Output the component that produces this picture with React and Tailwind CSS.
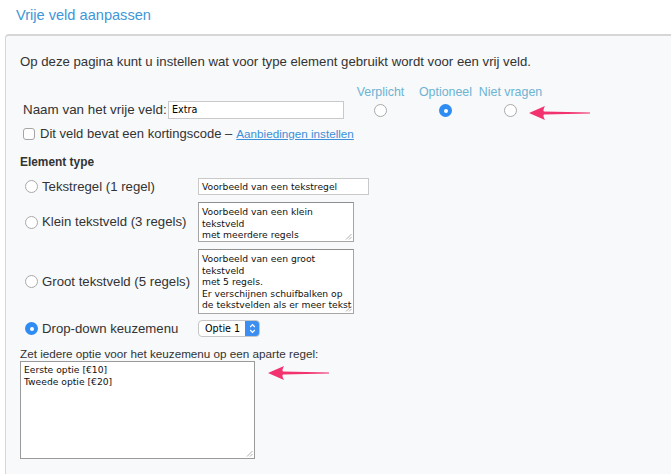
import React from "react";

const sans = { fontFamily: '"Liberation Sans", Arial, Helvetica, sans-serif' };

function Radio({ checked }) {
  return checked ? (
    <span className="inline-flex w-[13px] h-[13px] rounded-full bg-[#2f8cf3] items-center justify-center shrink-0">
      <span className="w-[4px] h-[4px] rounded-full bg-white" />
    </span>
  ) : (
    <span className="inline-block w-[13px] h-[13px] rounded-full border border-[#a9a9a9] bg-white shrink-0" />
  );
}

function Arrow() {
  return (
    <svg width="62" height="16" viewBox="0 0 62 16">
      <path
        d="M0 8 L16 1 Q13.5 5.5 15 6.6 L61 7.4 L61 8.4 L15 9.6 Q13.5 10.5 16 15 Z"
        fill="#f2336f"
      />
    </svg>
  );
}

const fieldFont = { fontFamily: '"DejaVu Sans", Verdana, sans-serif' };

function TextBox({ h, lines }) {
  return (
    <div
      className="relative w-[156px] border border-[#a6a6a6] border-t-[#8f8f8f] bg-white px-[3px] pt-[3px] text-[9.2px] leading-[11.5px] text-[#111] overflow-hidden"
      style={{ ...fieldFont, height: h }}
    >
      {lines.map((l, i) => (
        <div key={i} className="whitespace-nowrap">{l}</div>
      ))}
      <svg className="absolute right-[1px] bottom-[1px]" width="7" height="7" viewBox="0 0 7 7">
        <path d="M6.5 1 L1 6.5 M6.5 4 L4 6.5" stroke="#999" strokeWidth="0.8" />
      </svg>
    </div>
  );
}

export default function App() {
  return (
    <div className="w-[671px] h-[474px] overflow-hidden bg-white text-[#333] leading-[16px]" style={sans}>
      <div className="h-[34px] pl-[16px] pt-[5px] text-[14.6px] leading-[20px] text-[#3d97d8]">
        Vrije veld aanpassen
      </div>
      <div className="relative ml-[5px] h-[440px] border-l border-t-2 border-[#d6d6d6] rounded-tl-[4px] bg-[#f7f9fb] pl-[14px] pt-[18px]">
        <div className="text-[13.2px] leading-[16px] text-[#333]">
          Op deze pagina kunt u instellen wat voor type element gebruikt wordt voor een vrij veld.
        </div>

        <div className="mt-[15px] flex items-end">
          <div className="flex items-center pl-[3px] w-[328px]">
            <span className="w-[145px] text-[13.4px] leading-[18px] whitespace-nowrap">Naam van het vrije veld:</span>
            <div
              className="w-[176px] h-[18px] border border-[#c9c9c9] bg-white pl-[3px] text-[9.6px] leading-[16px] text-black"
              style={fieldFont}
            >
              Extra
            </div>
          </div>
          {[
            ["Verplicht", false],
            ["Optioneel", true],
            ["Niet vragen", false],
          ].map(([t, c]) => (
            <div key={t} className="w-[65px] flex flex-col items-center">
              <span className="text-[12.4px] leading-[14px] text-[#6eb3d2] whitespace-nowrap">{t}</span>
              <span className="mt-[5px] mb-[2px] flex"><Radio checked={c} /></span>
            </div>
          ))}
          <div className="absolute left-[523px] top-[69px]">
            <Arrow />
          </div>
        </div>

        <div className="mt-[7px] flex items-center pl-[3px] h-[16px] text-[13px] leading-[16px]">
          <span className="w-[12px] h-[12px] rounded-[3px] border border-[#a5a5a5] bg-white shrink-0" />
          <span className="ml-[5px] whitespace-nowrap">Dit veld bevat een kortingscode – </span>
          <span className="ml-[4px] text-[11.7px] text-[#3d8fd8] underline whitespace-nowrap">Aanbiedingen instellen</span>
        </div>

        <div className="mt-[12px] text-[11.9px] leading-[16px] font-bold text-[#333]">Element type</div>

        <div className="mt-[8px] flex flex-col gap-[7px]">
          <div className="flex items-center">
            <div className="w-[178px] pl-[5px] flex items-center">
              <Radio />
              <span className="ml-[4px] text-[13.2px] leading-[16px] whitespace-nowrap">Tekstregel (1 regel)</span>
            </div>
            <div
              className="w-[171px] h-[17px] border border-[#c9c9c9] bg-white pl-[3px] text-[9.2px] leading-[15px] text-[#111]"
              style={fieldFont}
            >
              Voorbeeld van een tekstregel
            </div>
          </div>
          <div className="flex items-center">
            <div className="w-[178px] pl-[5px] flex items-center">
              <Radio />
              <span className="ml-[4px] text-[13.2px] leading-[16px] whitespace-nowrap">Klein tekstveld (3 regels)</span>
            </div>
            <TextBox h={40} lines={["Voorbeeld van een klein", "tekstveld", "met meerdere regels"]} />
          </div>
          <div className="flex items-center">
            <div className="w-[178px] pl-[5px] flex items-center">
              <Radio />
              <span className="ml-[4px] text-[13.2px] leading-[16px] whitespace-nowrap">Groot tekstveld (5 regels)</span>
            </div>
            <TextBox
              h={65}
              lines={[
                "Voorbeeld van een groot",
                "tekstveld",
                "met 5 regels.",
                "Er verschijnen schuifbalken op",
                "de tekstvelden als er meer tekst",
              ]}
            />
          </div>
          <div className="flex items-center -mt-[1px]">
            <div className="w-[178px] pl-[5px] flex items-center">
              <Radio checked />
              <span className="ml-[4px] text-[13.2px] leading-[16px] whitespace-nowrap">Drop-down keuzemenu</span>
            </div>
            <div className="flex h-[17px] w-[62px] rounded-[4px] border border-[#c6c6c6] bg-white overflow-hidden">
              <span className="flex-1 pl-[6px] text-[9.6px] leading-[15px] text-black" style={fieldFont}>
                Optie 1
              </span>
              <span className="w-[14px] bg-[#3c8ff0] flex items-center justify-center">
                <svg width="7" height="11" viewBox="0 0 7 11">
                  <path d="M1.2 4 L3.5 1.7 L5.8 4 M1.2 7 L3.5 9.3 L5.8 7" fill="none" stroke="white" strokeWidth="1.2" />
                </svg>
              </span>
            </div>
          </div>
        </div>

        <div className="mt-[9px] text-[11.7px] leading-[15px] whitespace-nowrap">
          Zet iedere optie voor het keuzemenu op een aparte regel:
        </div>
        <div className="flex items-start">
          <div
            className="relative w-[235px] h-[98px] border border-[#9a9a9a] bg-white px-[3px] pt-[2px] text-[9.2px] leading-[11.5px] text-[#111]"
            style={fieldFont}
          >
            <div>Eerste optie [€10]</div>
            <div>Tweede optie [€20]</div>
            <svg className="absolute right-[1px] bottom-[1px]" width="7" height="7" viewBox="0 0 7 7">
              <path d="M6.5 1 L1 6.5 M6.5 4 L4 6.5" stroke="#999" strokeWidth="0.8" />
            </svg>
          </div>
          <div className="ml-[13px] mt-[4px]">
            <Arrow />
          </div>
        </div>
      </div>
    </div>
  );
}
